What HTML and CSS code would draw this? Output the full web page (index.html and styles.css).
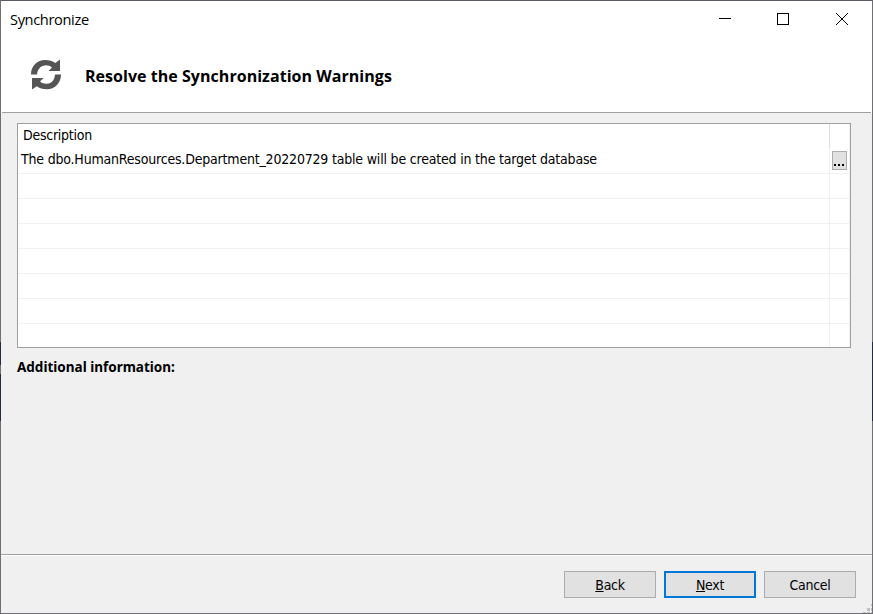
FILE: index.html
```html
<!DOCTYPE html>
<html lang="en">
<head>
<meta charset="utf-8">
<title>Synchronize</title>
<link rel="stylesheet" href="styles.css">
</head>
<body>
<main class="window">
  <header class="titlebar">
    <span class="caption">Synchronize</span>
    <svg class="controls" width="130" height="14" viewBox="0 0 130 14" fill="none" stroke="#000" shape-rendering="crispEdges">
      <path d="M0 6.5h12"/>
      <rect x="58.500" y="1.500" width="11" height="11"/>
      <path d="M117 1l12 12M129 1l-12 12" shape-rendering="auto"/>
    </svg>
  </header>
  <section class="banner">
    <svg class="sync" width="32" height="32" viewBox="0 0 32 32" fill="#555">
      <path d="M1 15.500C1 6.500 7.500 1 15 1C19.500 1 22.700 2 25.300 4L30 0.500V12H18.500L22 8.600C20 6.800 17.500 6.200 15 6.400C10.500 6.800 7.500 10 7 15.500Z"/>
      <path d="M31 15.500C31 24.500 24.500 30.200 17 30.200C12.500 30.200 9.300 29.200 6.700 27.200L2 30.500V19H13.500L10 22.500C12 24.300 14.500 24.900 17 24.700C21.500 24.300 24.500 21.500 25 15.500Z"/>
    </svg>
    <h1>Resolve the Synchronization Warnings</h1>
  </section>
  <section class="content">
    <div class="grid">
      <div class="row head"><div class="cell"><span class="label">Description</span></div><div class="action"></div></div>
      <div class="row first"><div class="cell"><span class="message">The dbo.HumanResources.Department_20220729 table will be created in the target database</span></div><div class="action"><button class="more" aria-label="More"><i></i><i></i><i></i></button></div></div>
      <div class="row"><div class="cell"></div><div class="action"></div></div>
      <div class="row"><div class="cell"></div><div class="action"></div></div>
      <div class="row"><div class="cell"></div><div class="action"></div></div>
      <div class="row"><div class="cell"></div><div class="action"></div></div>
      <div class="row"><div class="cell"></div><div class="action"></div></div>
      <div class="row"><div class="cell"></div><div class="action"></div></div>
      <div class="row last"><div class="cell"></div><div class="action"></div></div>
    </div>
    <h2><span>Additional information:</span></h2>
  </section>
  <footer class="footer">
    <button class="btn"><span><u>B</u>ack</span></button>
    <button class="btn primary"><span><u>N</u>ext</span></button>
    <button class="btn"><span>Cancel</span></button>
  </footer>
  <svg class="grip" width="9" height="9" viewBox="0 0 9 9" fill="#bfbfbf" shape-rendering="crispEdges">
    <path d="M8 0h1v2h-1zM4 4h3v3h-3zM8 4h1v3h-1zM0 8h3v1h-3zM4 8h3v1h-3zM8 8h1v1h-1z"/>
  </svg>
</main>
</body>
</html>
```

FILE: styles.css
```css
* { box-sizing: border-box; }
body { margin: 0; font-family: "DejaVu Sans Condensed", "DejaVu Sans", sans-serif; font-stretch: condensed; font-size: 14px; letter-spacing: -0.19px; color: #000; }
.window { position: relative; display: flex; flex-direction: column; width: 873px; height: 614px; border: 1px solid #707074; border-top-color: #5b5b66; background: #f0f0f0; }
/* Dark stretches of the window's side edges */
.window::before, .window::after { content: ""; position: absolute; top: 341px; width: 1px; height: 79px; background: #242b40; }
.window::before { left: -1px; background: linear-gradient(#242b40 23px, #77716c 23px 32px, #242b40 32px); }
.window::after { right: -1px; }
.titlebar { display: flex; justify-content: space-between; height: 38px; padding: 11px 23px 0 9px; background: #fff; }
.caption { margin-top: -1px; font: 14.6px/16px "Open Sans", sans-serif; letter-spacing: -0.35px; white-space: nowrap; }
.banner { display: flex; height: 74px; padding: 20px 0 0 29px; background: linear-gradient(#a0a0a0, #a0a0a0) 1px 100% / calc(100% - 2px) 1px no-repeat #fff; }
h1 { margin: 6px 0 0 23px; font: 700 16px/22px "Open Sans", sans-serif; letter-spacing: 0.04px; white-space: nowrap; }
.content { flex: 1; padding: 10px 21px 0 16px; }
.grid { height: 225px; border: 1px solid #a0a0a0; background: #fff; }
.row { display: flex; height: 25px; border-bottom: 1px solid #f0f0f0; }
.row.head { height: 24px; border-bottom: 0; }
.row.first { height: 26px; }
.row.last { height: 23px; border-bottom: 0; }
.cell { flex: 1; line-height: 23px; padding-left: 3px; white-space: nowrap; }
.head .cell { padding-left: 5px; letter-spacing: -0.25px; }
.action { width: 21px; border: solid #f0f0f0; border-width: 0 1px; }
.head .action { border-left-color: #dcdcdc; }
.more { display: flex; gap: 2px; align-items: flex-end; justify-content: flex-start; width: 15px; height: 19px; margin: 3px 0 0 2px; padding: 0 0 3px 1px; border: 1px solid #adadad; background: #e1e1e1; }
.more i { width: 2px; height: 2px; background: #000; }
h2 { margin: 8px 0 0; font: 700 13.5px/22px "Noto Sans", sans-serif; letter-spacing: 0; white-space: nowrap; }
.footer { display: flex; justify-content: flex-end; gap: 8px; height: 59px; padding: 16px 16px 0 0; border-top: 1px solid #a0a0a0; box-shadow: inset 0 1px #fff; }
.btn { width: 92px; height: 27px; padding: 0; border: 1px solid #adadad; background: #e1e1e1; color: #000; font: inherit; font-stretch: condensed; letter-spacing: -0.3px; line-height: 22px; }
.btn.primary { border: 2px solid #0078d7; }
.btn u { text-underline-offset: 1px; text-decoration-thickness: 1px; }
.grip { position: absolute; right: 0; bottom: 0; }
```
